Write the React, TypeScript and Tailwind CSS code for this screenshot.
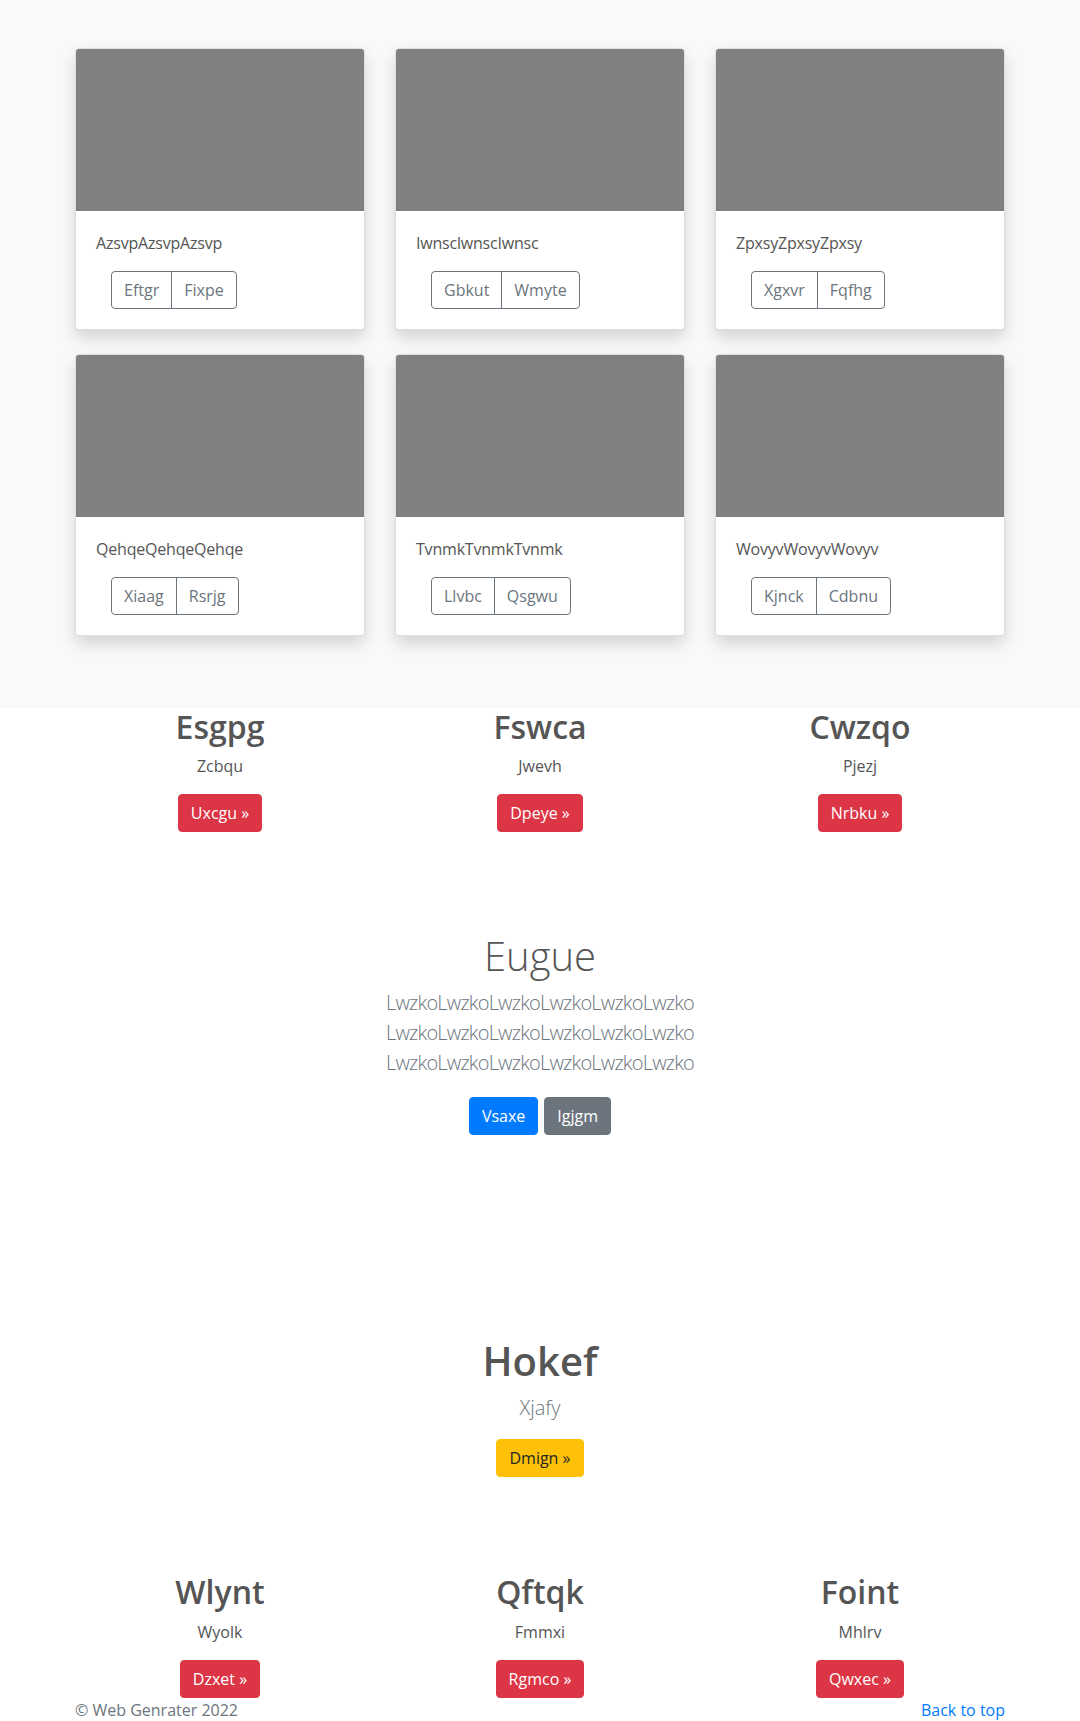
import type { ReactNode } from 'react'

interface CardItem {
  title: string
  buttons: [string, string]
}

const CARDS: CardItem[] = [
  { title: 'AzsvpAzsvpAzsvp', buttons: ['Eftgr', 'Fixpe'] },
  { title: 'IwnsclwnscIwnsc', buttons: ['Gbkut', 'Wmyte'] },
  { title: 'ZpxsyZpxsyZpxsy', buttons: ['Xgxvr', 'Fqfhg'] },
  { title: 'QehqeQehqeQehqe', buttons: ['Xiaag', 'Rsrjg'] },
  { title: 'TvnmkTvnmkTvnmk', buttons: ['Llvbc', 'Qsgwu'] },
  { title: 'WovyvWovyvWovyv', buttons: ['Kjnck', 'Cdbnu'] },
]

const TOP_COLS = [
  { title: 'Esgpg', text: 'Zcbqu', button: 'Uxcgu' },
  { title: 'Fswca', text: 'Jwevh', button: 'Dpeye' },
  { title: 'Cwzqo', text: 'Pjezj', button: 'Nrbku' },
]

const BOTTOM_COLS = [
  { title: 'Wlynt', text: 'Wyolk', button: 'Dzxet' },
  { title: 'Qftqk', text: 'Fmmxi', button: 'Rgmco' },
  { title: 'Foint', text: 'Mhlrv', button: 'Qwxec' },
]

const LEAD_WORD = 'LwzkoLwzkoLwzkoLwzkoLwzkoLwzko'

function Container({ children, className = '' }: { children: ReactNode; className?: string }) {
  return <div className={`w-[960px] mx-auto px-[15px] ${className}`}>{children}</div>
}

function Card({ item }: { item: CardItem }) {
  return (
    <div className="bg-white border border-black/[.125] rounded overflow-hidden shadow-[0_0.5rem_1rem_rgba(0,0,0,0.15)]">
      <div className="aspect-video bg-[#808080]" />
      <div className="p-5">
        <p className="text-base leading-6 mb-4 text-[#555] tracking-[-0.2px]">{item.title}</p>
        <div className="ml-[15px] inline-flex">
          <button className="px-3 py-1.5 leading-6 text-base text-[#6c757d] border border-[#6c757d] rounded-l">
            {item.buttons[0]}
          </button>
          <button className="-ml-px px-3 py-1.5 leading-6 text-base text-[#6c757d] border border-[#6c757d] rounded-r">
            {item.buttons[1]}
          </button>
        </div>
      </div>
    </div>
  )
}

function FeatureCols({ cols }: { cols: typeof TOP_COLS }) {
  return (
    <div className="grid grid-cols-3 gap-x-[30px] text-center">
      {cols.map(c => (
        <div key={c.title}>
          <h2 className="text-[32px] font-semibold leading-[1.2] mb-2 text-[#555]">{c.title}</h2>
          <p className="text-base leading-6 mb-4 text-[#555]">{c.text}</p>
          <a className="inline-block align-top px-3 py-1.5 leading-6 text-base text-white bg-[#dc3545] border border-[#dc3545] rounded">
            {c.button} »
          </a>
        </div>
      ))}
    </div>
  )
}

export default function App() {
  return (
    <div className="min-h-screen bg-white font-['Open_Sans',sans-serif] text-[#555]">
      {/* Album */}
      <section className="bg-[#f8f9fa] pt-12 pb-[72px]">
        <Container>
          <div className="grid grid-cols-3 gap-x-[30px] gap-y-6">
            {CARDS.map(c => (
              <Card key={c.title} item={c} />
            ))}
          </div>
        </Container>
      </section>

      {/* Features */}
      <section className="pb-4">
        <Container>
          <FeatureCols cols={TOP_COLS} />
        </Container>
      </section>

      {/* Jumbotron */}
      <section className="pt-[84px] pb-2 text-center">
        <Container className="max-w-[640px]">
          <h1 className="text-[40px] font-light leading-[1.2] mb-2 text-[#555]">Eugue</h1>
          <p className="text-[20px] font-light leading-[1.5] text-[#6c757d] tracking-[-0.8px]">
            {LEAD_WORD}
            <br />
            {LEAD_WORD}
            <br />
            {LEAD_WORD}
          </p>
          <div className="flex justify-center gap-[6px] mt-[19px]">
            <a className="inline-block px-3 py-1.5 leading-6 text-base text-white bg-[#007bff] border border-[#007bff] rounded">Vsaxe</a>
            <a className="inline-block px-3 py-1.5 leading-6 text-base text-white bg-[#6c757d] border border-[#6c757d] rounded">Igjgm</a>
          </div>
        </Container>
      </section>

      {/* Hero */}
      <section className="pt-[194px] text-center">
        <Container>
          <h1 className="text-[40px] font-semibold leading-[1.2] mb-2 text-[#555]">Hokef</h1>
          <p className="text-[20px] font-light leading-[1.5] mb-4 text-[#6c757d]">Xjafy</p>
          <a className="inline-block px-3 py-1.5 leading-6 text-base text-[#212529] bg-[#ffc107] border border-[#ffc107] rounded">Dmign »</a>
        </Container>
      </section>

      {/* Features bottom */}
      <section className="pt-24">
        <Container>
          <FeatureCols cols={BOTTOM_COLS} />
        </Container>
      </section>

      <footer className="text-[#6c757d]">
        <Container className="flex justify-between text-base leading-6">
          <p>© Web Genrater 2022</p>
          <a className="text-[#007bff]">Back to top</a>
        </Container>
      </footer>
    </div>
  )
}
